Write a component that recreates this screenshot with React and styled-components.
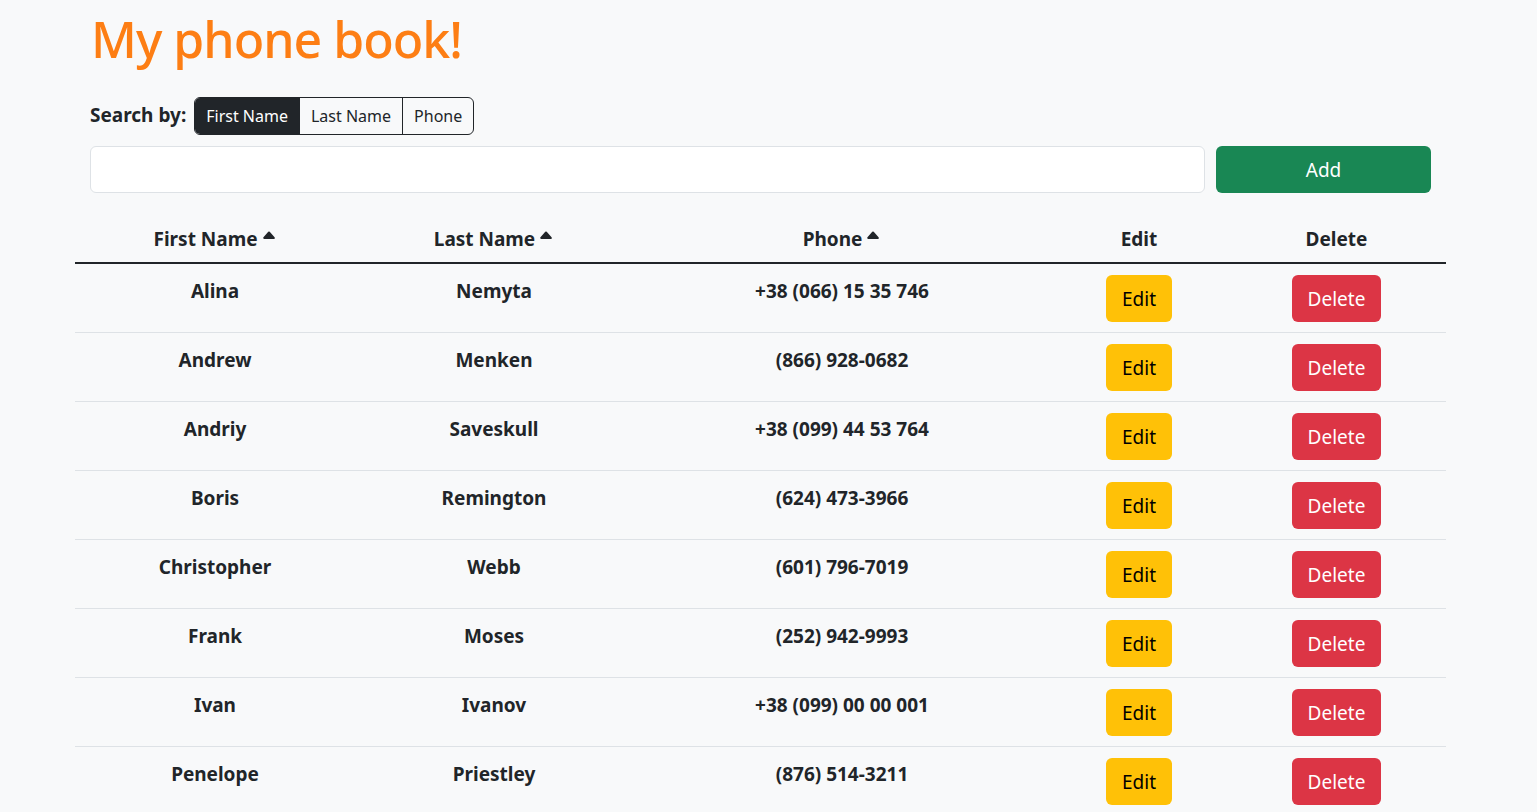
import React, { useState } from 'react';
import styled, { createGlobalStyle } from 'styled-components';

const GlobalStyle = createGlobalStyle`
  html, body {
    margin: 0;
    padding: 0;
    background: #f8f9fa;
    color: #212529;
    font-family: "Noto Sans", "Open Sans", sans-serif;
  }
  * { box-sizing: border-box; }
`;

const contacts = [
  { first: 'Alina', last: 'Nemyta', phone: '+38 (066) 15 35 746' },
  { first: 'Andrew', last: 'Menken', phone: '(866) 928-0682' },
  { first: 'Andriy', last: 'Saveskull', phone: '+38 (099) 44 53 764' },
  { first: 'Boris', last: 'Remington', phone: '(624) 473-3966' },
  { first: 'Christopher', last: 'Webb', phone: '(601) 796-7019' },
  { first: 'Frank', last: 'Moses', phone: '(252) 942-9993' },
  { first: 'Ivan', last: 'Ivanov', phone: '+38 (099) 00 00 001' },
  { first: 'Penelope', last: 'Priestley', phone: '(876) 514-3211' },
];

const Page = styled.div`
  width: 1371px;
  margin-left: 75px;
`;

const Title = styled.h1`
  margin: 0;
  padding: 4px 16px 0;
  font-size: 50px;
  letter-spacing: -1px;
  line-height: 70px;
  font-weight: 500;
  color: #fd7e14;
`;

const SearchForm = styled.div`
  padding: 0 15px;
`;

const SearchRow = styled.div`
  display: flex;
  align-items: center;
  gap: 8px;
  margin-top: 23px;
`;

const Label = styled.span`
  font-size: 19px;
  font-weight: 700;
  margin-top: -3px;
`;

const Group = styled.div`
  display: flex;
  border: 1px solid #212529;
  border-radius: 6px;
  overflow: hidden;
  height: 38px;
`;

const Toggle = styled.button`
  font-family: inherit;
  font-size: 16px;
  padding: 0 11px;
  border: none;
  border-left: ${p => (p.$first ? 'none' : '1px solid #212529')};
  background: ${p => (p.$active ? '#212529' : 'transparent')};
  color: ${p => (p.$active ? '#fff' : '#212529')};
  cursor: pointer;
`;

const InputRow = styled.div`
  display: flex;
  gap: 11px;
  margin-top: 11px;
`;

const Input = styled.input`
  flex: 1;
  height: 47px;
  border: 1px solid #dee2e6;
  border-radius: 6px;
  background: #fff;
  font-family: inherit;
  font-size: 20px;
  padding: 0 16px;
`;

const Btn = styled.button`
  font-family: inherit;
  font-size: 19px;
  line-height: 30px;
  padding: 8px 16px;
  border: none;
  border-radius: 6px;
  cursor: pointer;
  background: ${p => p.$bg};
  color: ${p => p.$color};
`;

const AddBtn = styled(Btn)`
  width: 215px;
  height: 47px;
  padding: 1px 0 0;
`;

const Table = styled.table`
  width: 100%;
  margin-top: 24px;
  border-collapse: collapse;
  table-layout: fixed;
`;

const Th = styled.th`
  width: ${p => p.$w}px;
  font-size: 19px;
  font-weight: 700;
  line-height: 30px;
  padding: 7px 0 8px;
  text-align: center;
  white-space: nowrap;
  border-bottom: 2px solid #212529;
`;

const Td = styled.td`
  font-size: 19px;
  font-weight: 700;
  line-height: 30px;
  padding: ${p => (p.$text ? '12px 0 0' : '11px 0 10px')};
  text-align: center;
  vertical-align: top;
  border-bottom: 1px solid #dee2e6;
`;

const RowBtn = styled(Btn)`
  height: 47px;
  padding: 0 16px;
`;

const CaretIcon = styled.svg`
  margin-left: 3px;
  vertical-align: 3px;
`;

const Caret = () => (
  <CaretIcon width="16" height="16" viewBox="0 0 16 16">
    <path d="M7.247 4.86l-4.796 5.481c-.566.647-.106 1.659.753 1.659h9.592a1 1 0 0 0 .753-1.659l-4.796-5.48a1 1 0 0 0-1.506 0z" fill="#212529" />
  </CaretIcon>
);

export default function App() {
  const [mode, setMode] = useState('first');
  return (
    <Page>
      <GlobalStyle />
      <Title>My phone book!</Title>
      <SearchForm>
        <SearchRow>
          <Label>Search by:</Label>
          <Group>
            <Toggle $first $active={mode === 'first'} onClick={() => setMode('first')}>First Name</Toggle>
            <Toggle $active={mode === 'last'} onClick={() => setMode('last')}>Last Name</Toggle>
            <Toggle $active={mode === 'phone'} onClick={() => setMode('phone')}>Phone</Toggle>
          </Group>
        </SearchRow>
        <InputRow>
          <Input />
          <AddBtn $bg="#198754" $color="#fff">Add</AddBtn>
        </InputRow>
      </SearchForm>
      <Table>
        <thead>
          <tr>
            <Th $w={280}>First Name<Caret /></Th>
            <Th $w={278}>Last Name<Caret /></Th>
            <Th $w={418}>Phone<Caret /></Th>
            <Th $w={176}>Edit</Th>
            <Th $w={219}>Delete</Th>
          </tr>
        </thead>
        <tbody>
          {contacts.map(c => (
            <tr key={c.phone}>
              <Td $text>{c.first}</Td>
              <Td $text>{c.last}</Td>
              <Td $text>{c.phone}</Td>
              <Td><RowBtn $bg="#ffc107" $color="#000">Edit</RowBtn></Td>
              <Td><RowBtn $bg="#dc3545" $color="#fff">Delete</RowBtn></Td>
            </tr>
          ))}
        </tbody>
      </Table>
    </Page>
  );
}
